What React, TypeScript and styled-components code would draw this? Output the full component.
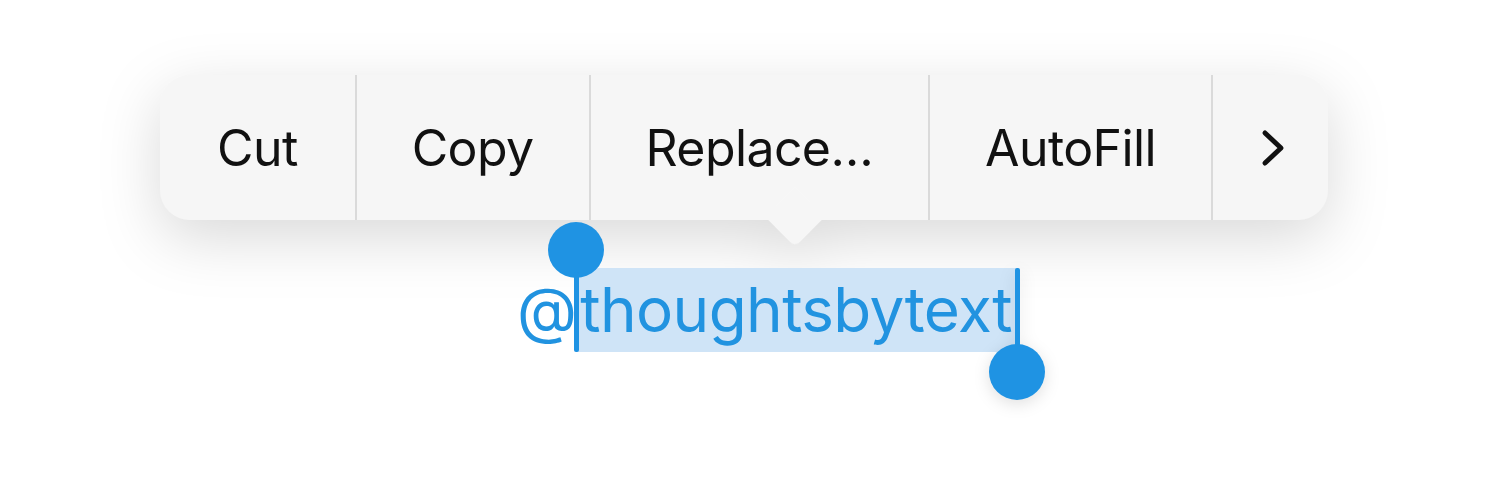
import React from 'react';
import styled, { createGlobalStyle } from 'styled-components';

const GlobalStyle = createGlobalStyle`
    html, body {
        margin: 0;
        padding: 0;
        background: #ffffff;
    }
    body {
        font-family: Inter, "Liberation Sans", sans-serif;
        -webkit-font-smoothing: antialiased;
    }
`;

const items = ['Cut', 'Copy', 'Replace…', 'AutoFill'];

const Chevron = () => (
    <svg width="24" height="38" viewBox="0 0 24 38" fill="none">
        <polyline
            points="4,4 20,19 4,34"
            stroke="#111"
            strokeWidth="5"
            strokeLinecap="round"
            strokeLinejoin="round"
        />
    </svg>
);

export default function App() {
    return (
        <>
            <GlobalStyle />
            <Stage>
                <MenuShadow>
                    <Menu>
                        {items.map((label, i) => (
                            <MenuItem key={label} $first={i === 0}>{label}</MenuItem>
                        ))}
                        <MoreItem>
                            <Chevron />
                        </MoreItem>
                    </Menu>
                </MenuShadow>

                <Selection>
                    <Prefix>@</Prefix>
                    <Selected>
                        thoughtsbytext
                        <StartHandle>
                            <Knob />
                            <Stem $height={80} />
                        </StartHandle>
                        <EndHandle>
                            <Stem $height={82} />
                            <Knob />
                        </EndHandle>
                    </Selected>
                </Selection>
            </Stage>
        </>
    );
}

const Stage = styled.div`
    width: 1500px;
    height: 500px;
    padding: 75px 0 0 160px;
    box-sizing: border-box;
    display: flex;
    flex-direction: column;
    align-items: flex-start;
    overflow: hidden;
`;

const MenuShadow = styled.div`
    filter: drop-shadow(0 18px 30px rgba(0, 0, 0, 0.15));
`;

const Menu = styled.div`
    position: relative;
    display: flex;
    height: 145px;
    background: #f6f6f6;
    border-radius: 30px;

    &::after {
        content: '';
        position: absolute;
        left: 614px;
        bottom: -18px;
        width: 42px;
        height: 42px;
        background: #f6f6f6;
        transform: rotate(45deg);
        border-bottom-right-radius: 6px;
    }
`;

const MenuItem = styled.div<{ $first?: boolean }>`
    display: flex;
    align-items: center;
    justify-content: center;
    padding: 0 55px;
    font-size: 50px;
    color: #111111;
    letter-spacing: -0.6px;
    border-left: ${(p) => (p.$first ? 'none' : '2px solid #dadada')};

    &:first-child {
        padding: 0 57px 0 57px;
    }
`;

const MoreItem = styled(MenuItem)`
    padding: 0 43px 0 48px;
`;

const Selection = styled.div`
    display: flex;
    align-items: baseline;
    margin: 48px 0 0 357px;
    font-size: 62px;
    line-height: 84px;
    color: #2193e0;
    letter-spacing: -0.6px;
`;

const Prefix = styled.span``;

const Selected = styled.span`
    position: relative;
    background: #cfe4f7;
    padding: 0 5px 0 4px;
`;

const Knob = styled.div`
    width: 56px;
    height: 56px;
    border-radius: 50%;
    background: #1f93e3;
    flex-shrink: 0;
`;

const Stem = styled.div<{ $height: number }>`
    width: 5px;
    height: ${(p) => p.$height}px;
    background: #1f93e3;
    border-radius: 2px;
`;

const StartHandle = styled.div`
    position: absolute;
    left: 0;
    bottom: 0;
    transform: translateX(-50%);
    display: flex;
    flex-direction: column;
    align-items: center;

    ${Stem} {
        margin-top: -6px;
    }
`;

const EndHandle = styled.div`
    position: absolute;
    left: 100%;
    top: 0;
    transform: translateX(-50%);
    display: flex;
    flex-direction: column;
    align-items: center;
    filter: drop-shadow(0 4px 8px rgba(0, 0, 0, 0.12));

    ${Knob} {
        margin-top: -6px;
    }
`;
